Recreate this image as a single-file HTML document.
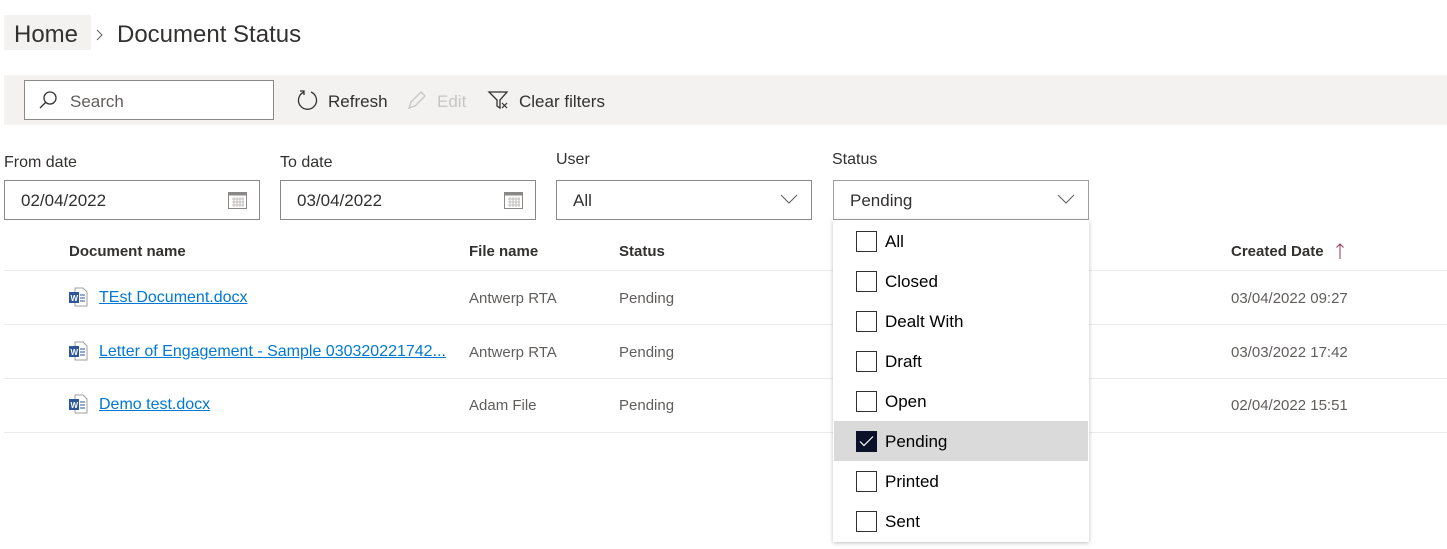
<!DOCTYPE html>
<html><head><meta charset="utf-8"><style>
*{box-sizing:border-box;margin:0;padding:0}
body{width:1447px;height:549px;background:#fff;font-family:"Segoe UI","Liberation Sans",sans-serif;color:#323130;position:relative;overflow:hidden}
.a{position:absolute;white-space:nowrap}
.inp{position:absolute;height:40px;border:1px solid #8a8886;background:#fff;font-size:17px;line-height:40px;padding-left:16px;color:#323130}
.lbl{position:absolute;font-size:16px;color:#323130}
.th{position:absolute;top:243px;font-size:15px;font-weight:bold;color:#323130}
.row{position:absolute;left:4px;width:1443px;border-bottom:1px solid #edebe9}
.td{position:absolute;font-size:15px;color:#605e5c}
.lnk{position:absolute;left:99px;font-size:16px;color:#0078d4;text-decoration:underline}
.it{position:absolute;left:834px;width:254px;height:40px}
.cb{position:absolute;left:22px;top:10px;width:21px;height:21px;border:1px solid #323130;background:#fff}
.it span{position:absolute;left:51px;top:11px;font-size:17px;color:#000}
</style></head><body>
<div class="a" style="left:4px;top:15px;width:87px;height:35px;background:#f3f2f1"></div>
<div class="a" style="left:14px;top:21px;font-size:24px;color:#323130">Home</div>
<svg class="a" style="left:95px;top:28px" width="10" height="14"><path d="M2 2l5 5-5 5" stroke="#605e5c" fill="none"/></svg>
<div class="a" style="left:117px;top:21px;font-size:24px;color:#323130">Document Status</div>

<div class="a" style="left:4px;top:75px;width:1443px;height:50px;background:#f3f2f1"></div>
<div class="a" style="left:24px;top:80px;width:250px;height:40px;border:1px solid #8a8886;background:#fff"></div>
<svg class="a" style="left:38px;top:90px" width="20" height="20"><circle cx="12" cy="8" r="6" stroke="#323130" fill="none" stroke-width="1.3"/><path d="M8 12L2 18" stroke="#323130" stroke-width="1.3"/></svg>
<div class="a" style="left:70px;top:92px;font-size:17px;color:#605e5c">Search</div>
<svg class="a" style="left:297px;top:89px" width="22" height="22"><path d="M7 3A9 9 0 1 0 14 3" stroke="#323130" fill="none" stroke-width="1.3"/><path d="M3 2h4v4" stroke="#323130" fill="none" stroke-width="1.3"/></svg>
<div class="a" style="left:328px;top:92px;font-size:17px">Refresh</div>
<svg class="a" style="left:406px;top:89px" width="22" height="22"><path d="M3 19l2-6L15 3l4 4L9 17z" stroke="#c8c6c4" fill="none" stroke-width="1.3"/></svg>
<div class="a" style="left:437px;top:92px;font-size:17px;color:#c8c6c4">Edit</div>
<svg class="a" style="left:487px;top:89px" width="24" height="22"><path d="M2 3h18l-7 8v8l-3-2v-6z" stroke="#323130" fill="none" stroke-width="1.3"/><path d="M15 14l5 5M20 14l-5 5" stroke="#323130" stroke-width="1.2"/></svg>
<div class="a" style="left:519px;top:92px;font-size:17px">Clear filters</div>

<div class="lbl" style="left:4px;top:154px">From date</div>
<div class="lbl" style="left:280px;top:154px">To date</div>
<div class="lbl" style="left:556px;top:151px">User</div>
<div class="lbl" style="left:832px;top:151px">Status</div>
<div class="inp" style="left:4px;top:180px;width:256px">02/04/2022</div>
<div class="inp" style="left:280px;top:180px;width:256px">03/04/2022</div>
<div class="inp" style="left:556px;top:180px;width:256px">All</div>
<div class="inp" style="left:833px;top:180px;width:256px;border-color:#a19f9d">Pending</div>
<svg class="a" style="left:227px;top:190px" width="22" height="20"><rect x="1.5" y="2.5" width="18" height="16" fill="#fff" stroke="#8a8886"/><rect x="1.5" y="2.5" width="18" height="3" fill="#8a8886"/><path d="M5 9h12M5 12h12M5 15h12M7 7v10M10 7v10M13 7v10M16 7v10" stroke="#b3b0ad" stroke-width="0.8"/></svg>
<svg class="a" style="left:503px;top:190px" width="22" height="20"><rect x="1.5" y="2.5" width="18" height="16" fill="#fff" stroke="#8a8886"/><rect x="1.5" y="2.5" width="18" height="3" fill="#8a8886"/><path d="M5 9h12M5 12h12M5 15h12M7 7v10M10 7v10M13 7v10M16 7v10" stroke="#b3b0ad" stroke-width="0.8"/></svg>
<svg class="a" style="left:780px;top:193px" width="18" height="12"><path d="M1 2l8 8 8-8" stroke="#605e5c" fill="none"/></svg>
<svg class="a" style="left:1057px;top:193px" width="18" height="12"><path d="M1 2l8 8 8-8" stroke="#605e5c" fill="none"/></svg>

<div class="th" style="left:69px">Document name</div>
<div class="th" style="left:469px">File name</div>
<div class="th" style="left:619px">Status</div>
<div class="th" style="left:1231px">Created Date</div>
<svg class="a" style="left:1334px;top:242px" width="12" height="18"><path d="M6 17V2M2.5 5.5L6 2l3.5 3.5" stroke="#8e3a5a" fill="none" stroke-width="1"/></svg>
<div class="row" style="top:270px;height:1px"></div>
<div class="row" style="top:271px;height:54px"></div>
<div class="row" style="top:325px;height:54px"></div>
<div class="row" style="top:379px;height:54px"></div>

<svg class="a" style="left:68px;top:287px" width="22" height="20"><path d="M7 1h8l4 4v14H7z" fill="#fff" stroke="#a19f9d"/><path d="M12 8h5M12 11h5M12 14h5" stroke="#2b579a"/><rect x="1" y="5" width="10" height="11" fill="#2b579a"/><text x="2.5" y="14" font-size="8" fill="#fff" font-family="Liberation Sans" font-weight="bold">W</text></svg>
<svg class="a" style="left:68px;top:341px" width="22" height="20"><path d="M7 1h8l4 4v14H7z" fill="#fff" stroke="#a19f9d"/><path d="M12 8h5M12 11h5M12 14h5" stroke="#2b579a"/><rect x="1" y="5" width="10" height="11" fill="#2b579a"/><text x="2.5" y="14" font-size="8" fill="#fff" font-family="Liberation Sans" font-weight="bold">W</text></svg>
<svg class="a" style="left:68px;top:394px" width="22" height="20"><path d="M7 1h8l4 4v14H7z" fill="#fff" stroke="#a19f9d"/><path d="M12 8h5M12 11h5M12 14h5" stroke="#2b579a"/><rect x="1" y="5" width="10" height="11" fill="#2b579a"/><text x="2.5" y="14" font-size="8" fill="#fff" font-family="Liberation Sans" font-weight="bold">W</text></svg>
<div class="lnk" style="top:289px">TEst Document.docx</div>
<div class="lnk" style="top:343px">Letter of Engagement - Sample 030320221742...</div>
<div class="lnk" style="top:396px">Demo test.docx</div>
<div class="td" style="left:469px;top:290px">Antwerp RTA</div>
<div class="td" style="left:469px;top:344px">Antwerp RTA</div>
<div class="td" style="left:469px;top:397px">Adam File</div>
<div class="td" style="left:619px;top:290px">Pending</div>
<div class="td" style="left:619px;top:344px">Pending</div>
<div class="td" style="left:619px;top:397px">Pending</div>
<div class="td" style="left:1231px;top:290px">03/04/2022 09:27</div>
<div class="td" style="left:1231px;top:344px">03/03/2022 17:42</div>
<div class="td" style="left:1231px;top:397px">02/04/2022 15:51</div>

<div class="a" style="left:833px;top:220px;width:256px;height:322px;background:#fff;box-shadow:0 1px 4px rgba(0,0,0,.25)"></div>
<div class="it" style="top:221px"><div class="cb"></div><span>All</span></div>
<div class="it" style="top:261px"><div class="cb"></div><span>Closed</span></div>
<div class="it" style="top:301px"><div class="cb"></div><span>Dealt With</span></div>
<div class="it" style="top:341px"><div class="cb"></div><span>Draft</span></div>
<div class="it" style="top:381px"><div class="cb"></div><span>Open</span></div>
<div class="it" style="top:421px;background:#dadada"><div class="cb" style="background:#0b1128;border-color:#0b1128"><svg width="19" height="19" style="position:absolute;left:0;top:0"><path d="M3 9.5l4 4 9-9" stroke="#fff" fill="none" stroke-width="1.2"/></svg></div><span>Pending</span></div>
<div class="it" style="top:461px"><div class="cb"></div><span>Printed</span></div>
<div class="it" style="top:501px"><div class="cb"></div><span>Sent</span></div>
</body></html>
